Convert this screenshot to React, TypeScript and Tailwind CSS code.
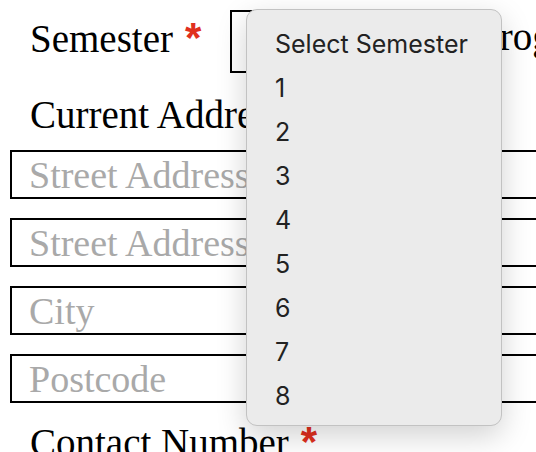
import { useState } from 'react'

const semesters = ['1', '2', '3', '4', '5', '6', '7', '8']

function Required() {
  return <span className="ml-[12px] font-['Liberation_Sans',sans-serif] text-[42px] font-bold text-[#e0301e]">*</span>
}

function AddressInput({ placeholder }: { placeholder: string }) {
  return (
    <input
      placeholder={placeholder}
      className="block h-[49px] w-[560px] border-2 border-black bg-white pl-[17px] font-['Liberation_Serif',serif] text-[38px] leading-none outline-none placeholder:text-[#a9a9a9]"
    />
  )
}

export default function App() {
  const [selected] = useState('Select Semester')

  return (
    <div className="relative h-[452px] w-[536px] overflow-hidden bg-white font-['Liberation_Serif',serif] text-[39px] text-black">
      <div className="flex h-[63px] items-start pt-[10px] box-content">
        <label className="mt-[7px] w-[230px] shrink-0 pl-[30px] leading-none">
          Semester
          <Required />
        </label>
        <div className="h-[63px] w-[230px] shrink-0 border-2 border-black" />
        <span className="ml-[18px] mt-[7px] shrink-0 leading-none">Program</span>
      </div>

      <div className="mt-[22px] pl-[30px] leading-none">Current Address</div>

      <div className="mt-[16px] flex flex-col gap-[19px] pl-[10px]">
        <AddressInput placeholder="Street Address" />
        <AddressInput placeholder="Street Address" />
        <AddressInput placeholder="City" />
        <AddressInput placeholder="Postcode" />
      </div>

      <div className="mt-[18px] pl-[30px] leading-none">
        Contact Number
        <Required />
      </div>

      {/* native select popup */}
      <div className="absolute left-[246px] top-[9px] w-[256px] rounded-[11px] border border-[#c2c2c2] bg-[#ebebeb] pb-[6px] pt-[13px] font-['Inter',sans-serif] text-[25px] text-[#222] shadow-[0_10px_30px_rgba(0,0,0,0.18)]">
        <div className="flex h-[44px] items-center pl-[28px]">{selected}</div>
        {semesters.map((s) => (
          <div key={s} className="flex h-[44px] items-center pl-[28px]">
            {s}
          </div>
        ))}
      </div>
    </div>
  )
}
